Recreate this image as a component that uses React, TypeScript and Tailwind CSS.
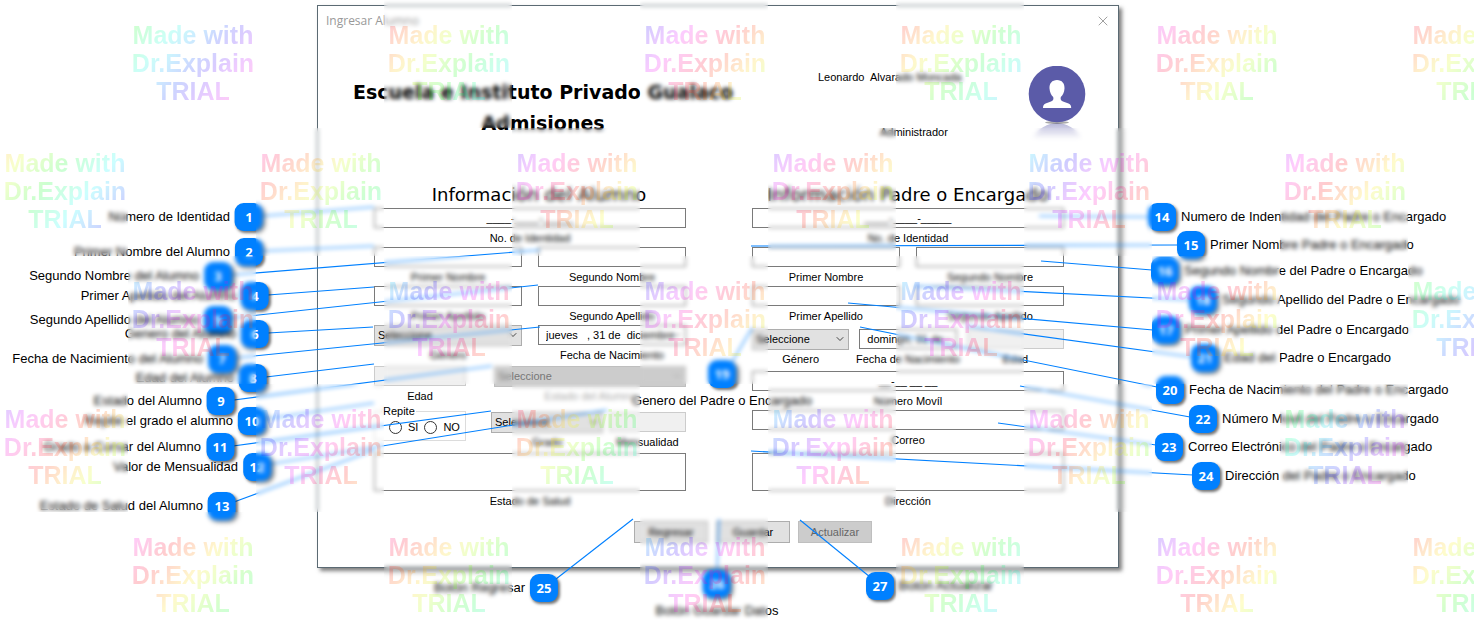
import { ReactNode } from "react";
import { ChevronDown, X } from "lucide-react";

type Side = "left" | "right" | "below";

interface Note {
  n: number;
  text: string;
  side: Side;
  x: number;
  y: number;
  from: [number, number];
  to: [number, number];
}

const NOTES: Note[] = [
  { n: 1, text: "Número de Identidad", side: "left", x: 249, y: 217, from: [262, 216], to: [374, 207] },
  { n: 2, text: "Primer Nombre del Alumno", side: "left", x: 249, y: 252, from: [262, 251], to: [374, 246] },
  { n: 3, text: "Segundo Nombre del Alumno", side: "left", x: 218, y: 276, from: [231, 275], to: [540, 250] },
  { n: 4, text: "Primer Apellido del Alumno", side: "left", x: 255, y: 296, from: [268, 295], to: [374, 287] },
  { n: 5, text: "Segundo Apellido del Alumno", side: "left", x: 218, y: 320, from: [231, 318], to: [538, 285] },
  { n: 6, text: "Genero del Alumno", side: "left", x: 255, y: 334, from: [268, 333], to: [373, 327] },
  { n: 7, text: "Fecha de Nacimiento del Alumno", side: "left", x: 222, y: 359, from: [235, 358], to: [540, 327] },
  { n: 8, text: "Edad del Alumno", side: "left", x: 253, y: 378, from: [266, 377], to: [374, 364] },
  { n: 9, text: "Estado del Alumno", side: "left", x: 221, y: 401, from: [234, 400], to: [492, 366] },
  { n: 10, text: "Repite el grado el alumno", side: "left", x: 252, y: 421, from: [265, 419], to: [374, 403] },
  { n: 11, text: "Grado a Cursar del Alumno", side: "left", x: 220, y: 447, from: [233, 446], to: [491, 411] },
  { n: 12, text: "Valor de Mensualidad", side: "left", x: 257, y: 467, from: [270, 464], to: [607, 410] },
  { n: 13, text: "Estado de Salud del Alumno", side: "left", x: 222, y: 506, from: [234, 502], to: [374, 450] },
  { n: 14, text: "Numero de Indentidad del Padre o Encargado", side: "right", x: 1162, y: 217, from: [1149, 217], to: [1039, 216] },
  { n: 15, text: "Primer Nombre Padre o Encargado", side: "right", x: 1191, y: 245, from: [1178, 245], to: [751, 246] },
  { n: 16, text: "Segundo Nombre del Padre o Encargado", side: "right", x: 1165, y: 271, from: [1152, 270], to: [1041, 261] },
  { n: 18, text: "Segundo Apellido del Padre o Encargado", side: "right", x: 1203, y: 300, from: [1190, 300], to: [915, 286] },
  { n: 17, text: "Primer Apellido del Padre o Encargado", side: "right", x: 1166, y: 330, from: [1153, 330], to: [848, 303] },
  { n: 21, text: "Edad del Padre o Encargado", side: "right", x: 1205, y: 358, from: [1192, 357], to: [966, 326] },
  { n: 20, text: "Fecha de Nacimiento del Padre o Encargado", side: "right", x: 1170, y: 390, from: [1157, 387], to: [860, 327] },
  { n: 22, text: "Número Movil del Padre o Encargado", side: "right", x: 1203, y: 419, from: [1190, 417], to: [1020, 386] },
  { n: 23, text: "Correo Electrónico del Padre o Encargado", side: "right", x: 1169, y: 447, from: [1156, 445], to: [998, 423] },
  { n: 24, text: "Dirección del Padre o Encargado", side: "right", x: 1206, y: 476, from: [1193, 475], to: [751, 451] },
  { n: 19, text: "Genero del Padre o Encargado", side: "below", x: 722, y: 374, from: [732, 362], to: [752, 328] },
  { n: 25, text: "Botón Regresar", side: "left", x: 544, y: 588, from: [556, 579], to: [633, 519] },
  { n: 26, text: "Botón Guardar Datos", side: "below", x: 717, y: 584, from: [717, 572], to: [719, 519] },
  { n: 27, text: "Botón Actualizar", side: "right", x: 880, y: 586, from: [870, 577], to: [800, 520] },
];

/* Starting hue of the rainbow for each watermark, row by row. */
const HUES: (number | null)[][] = [
  [null, 115, null, 350, null, 240, null, 355, null, 290, null, 345],
  [40, null, 320, null, 255, null, 255, null, 185, null, 275, null],
  [null, 195, null, 185, null, 235, null, 190, null, 250, null, 110],
  [260, null, 195, null, 335, null, 190, null, 270, null, 115, null],
  [null, 300, null, 325, null, 195, null, 355, null, 250, null, 0],
];

function rainbow(start: number) {
  const stops = Array.from({ length: 9 }, (_, i) => `hsl(${start + i * 28} 100% 50% / 0.2)`);
  return `linear-gradient(130deg, ${stops.join(", ")})`;
}

function Watermarks() {
  return (
    <div
      aria-hidden="true"
      className="pointer-events-none absolute inset-0 grid auto-rows-[128px] grid-cols-[repeat(12,128px)] overflow-hidden"
    >
      {HUES.flat().map((hue, i) =>
        hue === null ? (
          <div key={i} />
        ) : (
          <div key={i} className="flex justify-center pt-[21px] pl-[2px] backdrop-blur-[2px]">
            <div
              className="h-[84px] bg-clip-text text-center text-[25px] leading-[28px] font-bold whitespace-nowrap text-transparent"
              style={{ backgroundImage: rainbow(hue) }}
            >
              Made with
              <br />
              Dr.Explain
              <br />
              TRIAL
            </div>
          </div>
        ),
      )}
    </div>
  );
}

function Badge({ n }: { n: number }) {
  return (
    <span className="flex size-7 shrink-0 items-center justify-center rounded-[9px] bg-[#0080ff] font-['Open_Sans',sans-serif] text-[13px] leading-none font-bold text-white shadow-[2px_2px_3px_rgba(0,0,0,0.55)]">
      {n}
    </span>
  );
}

const NOTE_PLACEMENT: Record<Side, string> = {
  left: "flex-row-reverse -translate-x-full -translate-y-1/2",
  right: "flex-row -translate-y-1/2",
  below: "flex-col -translate-x-1/2",
};

function Callouts() {
  return (
    <div className="pointer-events-none absolute inset-0 overflow-hidden">
      <svg className="absolute inset-0 size-full" stroke="#0080ff" strokeWidth="1.1">
        {NOTES.map((a) => (
          <line key={a.n} x1={a.from[0]} y1={a.from[1]} x2={a.to[0]} y2={a.to[1]} />
        ))}
      </svg>
      {NOTES.map((a) => (
        <div
          key={a.n}
          className={`absolute flex items-center gap-[5px] text-[13px] leading-4 whitespace-nowrap text-black ${NOTE_PLACEMENT[a.side]}`}
          style={{
            left: a.side === "left" ? a.x + 14 : a.side === "right" ? a.x - 14 : a.x,
            top: a.side === "below" ? a.y - 14 : a.y,
          }}
        >
          <Badge n={a.n} />
          <span>{a.text}</span>
        </div>
      ))}
    </div>
  );
}

function Field({
  id,
  label,
  className = "flex-1",
  faint = false,
  children,
}: {
  id: string;
  label: string;
  className?: string;
  faint?: boolean;
  children: ReactNode;
}) {
  return (
    <div className={`flex min-w-0 flex-col items-center ${className}`}>
      {children}
      <label
        htmlFor={id}
        className={`h-[19px] pt-px leading-[19px] whitespace-nowrap ${faint ? "text-[#aaa]" : "text-black"}`}
      >
        {label}
      </label>
    </div>
  );
}

function TextField({
  id,
  label,
  value = "",
  disabled = false,
  centered = false,
  dropdown = false,
  className = "flex-1",
}: {
  id: string;
  label: string;
  value?: string;
  disabled?: boolean;
  centered?: boolean;
  dropdown?: boolean;
  className?: string;
}) {
  return (
    <Field id={id} label={label} className={className}>
      <div className="relative h-5 w-full">
        <input
          id={id}
          type="text"
          defaultValue={value}
          disabled={disabled}
          className={`block h-5 w-full border ${
            disabled ? "border-[#ccc] bg-[#f0f0f0]" : "border-[#7a7a7a] bg-white"
          } ${centered ? "px-1 text-center" : "pl-[7px]"}`}
        />
        {dropdown && (
          <ChevronDown className="pointer-events-none absolute top-1 right-[3px] size-3 text-[#666]" strokeWidth={2} />
        )}
      </div>
    </Field>
  );
}

function SelectField({
  id,
  label,
  disabled = false,
  faint = false,
  className = "flex-1",
}: {
  id: string;
  label: string;
  disabled?: boolean;
  faint?: boolean;
  className?: string;
}) {
  return (
    <Field id={id} label={label} className={className} faint={faint}>
      <div className="relative h-5 w-full">
        <select
          id={id}
          disabled={disabled}
          className={`h-[21px] w-full appearance-none border pl-[3px] opacity-100 ${
            disabled ? "border-[#bfbfbf] bg-[#ccc] text-[#777]" : "border-[#adadad] bg-[#e1e1e1] text-black"
          }`}
        >
          <option>Seleccione</option>
        </select>
        <ChevronDown
          className={`pointer-events-none absolute top-1 right-[3px] size-3 ${disabled ? "text-[#aaa]" : "text-[#444]"}`}
          strokeWidth={2}
        />
      </div>
    </Field>
  );
}

function AreaField({ id, label }: { id: string; label: string }) {
  return (
    <Field id={id} label={label}>
      <textarea id={id} className="block h-[38px] w-full resize-none border border-[#7a7a7a] bg-white" />
    </Field>
  );
}

function Avatar() {
  return (
    <svg viewBox="0 0 58 74" className="h-[74px] w-[58px]" role="img" aria-label="Usuario">
      <defs>
        <linearGradient id="fade" x1="0" y1="0" x2="0" y2="1">
          <stop offset="0" stopColor="#5b5ba8" stopOpacity="0.45" />
          <stop offset="1" stopColor="#5b5ba8" stopOpacity="0" />
        </linearGradient>
      </defs>
      <path d="M4 73 C10 62 20 57 29 57 C38 57 48 62 54 73 Z" fill="url(#fade)" />
      <ellipse cx="29" cy="56.5" rx="12" ry="1.5" fill="#555" opacity="0.5" />
      <circle cx="29" cy="28" r="28.3" fill="#5b5ba8" />
      <path
        d="M29 14 C34 14 36.8 17.5 36.5 22.5 C36.3 26.5 34.8 29 32.8 31 C32.3 33.2 32.8 34.8 35 35.6 L40.5 37.6 C42.6 38.5 43.2 40 43.2 42 L15 42 C15 40 15.6 38.5 17.6 37.6 L23 35.6 C25.3 34.8 25.8 33.2 25.2 31 C23.2 29 21.8 26.5 21.5 22.5 C21.2 17.5 24 14 29 14 Z"
        fill="#fff"
      />
    </svg>
  );
}

const BUTTON = "h-[22px] w-[74px] border text-center";
const RADIO = "size-[13px] shrink-0 appearance-none rounded-full border border-[#333] bg-white";

export default function App() {
  return (
    <main className="relative min-h-screen overflow-hidden bg-white pt-[5px] pb-[68px] pl-[317px] font-['Liberation_Sans',Arial,sans-serif]">
      <section
        aria-label="Ingresar Alumno"
        className="w-[802px] border border-[#5b6a73] bg-white pb-[24px] text-[11px] shadow-[3px_3px_4px_rgba(0,0,0,0.5)]"
      >
        <header className="flex h-[29px] items-center justify-between pr-[7px] pl-2">
          <h2 className="font-['Open_Sans',sans-serif] text-[12px] text-[#999]">Ingresar Alumno</h2>
          <button type="button" aria-label="Cerrar" className="text-[#888]">
            <X className="size-4" strokeWidth={1.2} />
          </button>
        </header>

        <div className="flex h-[150px] pt-[31px]">
          <h1 className="w-[450px] pt-[11px] text-center font-['DejaVu_Sans',Verdana,sans-serif] text-[19px] leading-[31px] font-bold whitespace-nowrap">
            Escuela e Instituto Privado Gualaco
            <br />
            Admisiones
          </h1>
          <div className="flex w-[210px] flex-col gap-[39px] pt-[3px] pl-[50px] leading-4">
            <p className="whitespace-pre">Leonardo  Alvarado Moncada</p>
            <p className="pl-[62px]">Administrador</p>
          </div>
          <div className="pl-[50px]">
            <Avatar />
          </div>
        </div>

        <div className="flex gap-[66px] pl-14">
          <div className="w-[312px] shrink-0">
            <h3 className="h-[23px] pl-[18px] text-center font-['DejaVu_Sans',Verdana,sans-serif] text-[18px] leading-5 whitespace-nowrap">
              Información del Alumno
            </h3>
            <TextField id="a-id" label="No. de Identidad" value="____-____-_____" centered />
            <div className="flex gap-4">
              <TextField id="a-nombre1" label="Primer Nombre" />
              <TextField id="a-nombre2" label="Segundo Nombre" />
            </div>
            <div className="flex gap-4">
              <TextField id="a-apellido1" label="Primer Apellido" />
              <TextField id="a-apellido2" label="Segundo Apellido" />
            </div>
            <div className="flex gap-4">
              <SelectField id="a-genero" label="Género" />
              <TextField id="a-fecha" label="Fecha de Nacimiento" value="jueves   , 31 de  diciembre" dropdown />
            </div>
            <div className="flex justify-between pt-[2px]">
              <TextField id="a-edad" label="Edad" disabled className="w-[92px]" />
              <SelectField id="a-estado" label="Estado del Alumno" disabled faint className="w-[192px]" />
            </div>
            <div className="flex justify-between">
              <fieldset className="h-9 w-[92px] border border-[#dcdcdc] px-1">
                <legend className="ml-[3px] px-px leading-[13px]">Repite</legend>
                <div className="flex items-center gap-[6px] pt-px pl-[10px]">
                  <label className="flex items-center gap-[6px]">
                    <input type="radio" name="repite" className={RADIO} />
                    SI
                  </label>
                  <label className="flex items-center gap-[6px]">
                    <input type="radio" name="repite" className={RADIO} />
                    NO
                  </label>
                </div>
              </fieldset>
              <div className="flex gap-[6px] pt-[7px]">
                <SelectField id="a-grado" label="Grado" className="w-[112px]" />
                <TextField id="a-mensualidad" label="Mensualidad" disabled className="w-[77px]" />
              </div>
            </div>
            <div className="pt-[2px]">
              <AreaField id="a-salud" label="Estado de Salud" />
            </div>
          </div>

          <div className="w-[312px] shrink-0">
            <h3 className="h-[23px] text-center font-['DejaVu_Sans',Verdana,sans-serif] text-[18px] leading-5 whitespace-nowrap">
              Información Padre o Encargado
            </h3>
            <TextField id="p-id" label="No. de Identidad" value="____-____-_____" centered />
            <div className="flex gap-4">
              <TextField id="p-nombre1" label="Primer Nombre" />
              <TextField id="p-nombre2" label="Segundo Nombre" />
            </div>
            <div className="flex gap-4">
              <TextField id="p-apellido1" label="Primer Apellido" />
              <TextField id="p-apellido2" label="Segundo Apellido" />
            </div>
            <div className="flex gap-[10px] pt-1 pb-[3px]">
              <SelectField id="p-genero" label="Género" />
              <TextField id="p-fecha" label="Fecha de Nacimiento" value="domingo, 31 de" dropdown />
              <TextField id="p-edad" label="Edad" disabled />
            </div>
            <TextField id="p-movil" label="Número Movíl" value="__-__ __ __" centered />
            <TextField id="p-correo" label="Correo" />
            <div className="pt-[4px]">
              <AreaField id="p-direccion" label="Dirección" />
            </div>
          </div>
        </div>

        <div className="flex gap-2 pt-[11px] pl-[316px]">
          <button type="button" className={`${BUTTON} border-[#adadad] bg-[#e1e1e1]`}>
            Regresar
          </button>
          <button type="button" className={`${BUTTON} border-[#adadad] bg-[#e1e1e1]`}>
            Guardar
          </button>
          <button type="button" disabled className={`${BUTTON} border-[#bfbfbf] bg-[#ccc] text-[#666]`}>
            Actualizar
          </button>
        </div>
      </section>

      <Callouts />
      <Watermarks />
    </main>
  );
}
